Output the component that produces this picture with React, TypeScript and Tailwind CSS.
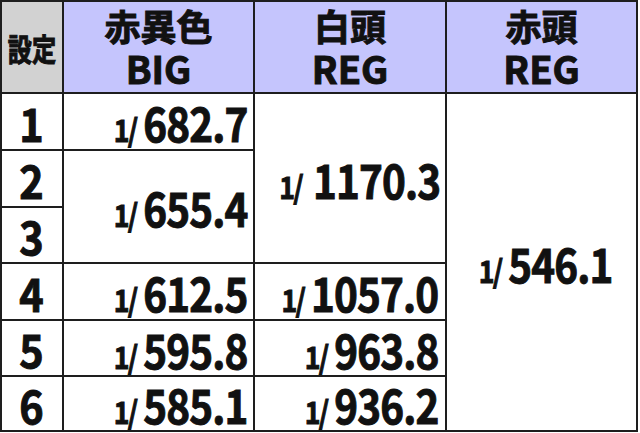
const font = { fontFamily: '"Noto Sans CJK JP", "Noto Sans", sans-serif' };

function Num({ v, gap = false }: { v: string; gap?: boolean }) {
  return (
    <span className="inline-flex origin-right scale-x-[0.86] items-baseline whitespace-nowrap leading-none">
      <span className={`text-[31px] font-bold tracking-[-2px] ${gap ? "mr-[13px]" : "mr-[8px]"}`}>1/</span>
      <span className="text-[47px] font-bold tracking-[-1px]">{v}</span>
    </span>
  );
}

function Head({ top, bottom }: { top: string; bottom: string }) {
  return (
    <div className="flex flex-col items-center justify-center bg-[#c5c5fd] font-bold leading-none">
      <span className="text-[36px]">{top}</span>
      <span className="mt-[6px] text-[38px]">{bottom}</span>
    </div>
  );
}

const cell = "flex items-center bg-white";

export default function App() {
  return (
    <div className="h-[433px] w-[640px] bg-white text-[#111] [-webkit-text-stroke:1px_#111]" style={font}>
      <div className="grid w-[638px] grid-cols-[60px_189px_190px_189px] grid-rows-[90px_55px_55px_54px_55px_54px_53px] gap-[2px] bg-[#1e1e1e] p-[2px]">
        <div className="flex items-center justify-center bg-[#d2d2d2] leading-none">
          <span className="inline-block scale-x-[0.78] whitespace-nowrap text-[31px] font-bold">設定</span>
        </div>
        <Head top="赤異色" bottom="BIG" />
        <Head top="白頭" bottom="REG" />
        <Head top="赤頭" bottom="REG" />

        {["1", "2", "3", "4", "5", "6"].map((s, i) => (
          <div
            key={s}
            className={`${cell} col-start-1 justify-center text-[46px] font-bold leading-none`}
            style={{ gridRowStart: i + 2 }}
          >
            <span className="inline-block scale-x-[0.9]">{s}</span>
          </div>
        ))}

        <div className={`${cell} col-start-2 row-start-2 justify-end pr-[6px]`}><Num v="682.7" /></div>
        <div className={`${cell} col-start-2 row-start-3 row-span-2 justify-end pr-[6px]`}><Num v="655.4" /></div>
        <div className={`${cell} col-start-2 row-start-5 justify-end pr-[6px]`}><Num v="612.5" /></div>
        <div className={`${cell} col-start-2 row-start-6 justify-end pr-[6px]`}><Num v="595.8" /></div>
        <div className={`${cell} col-start-2 row-start-7 justify-end pr-[6px]`}><Num v="585.1" /></div>

        <div className={`${cell} col-start-3 row-start-2 row-span-3 justify-end pr-[5px]`}><Num v="1170.3" gap /></div>
        <div className={`${cell} col-start-3 row-start-5 justify-end pr-[7px]`}><Num v="1057.0" /></div>
        <div className={`${cell} col-start-3 row-start-6 justify-end pr-[7px]`}><Num v="963.8" /></div>
        <div className={`${cell} col-start-3 row-start-7 justify-end pr-[7px]`}><Num v="936.2" /></div>

        <div className={`${cell} col-start-4 row-start-2 row-span-6 justify-end pr-[24px]`}><Num v="546.1" /></div>
      </div>
    </div>
  );
}
